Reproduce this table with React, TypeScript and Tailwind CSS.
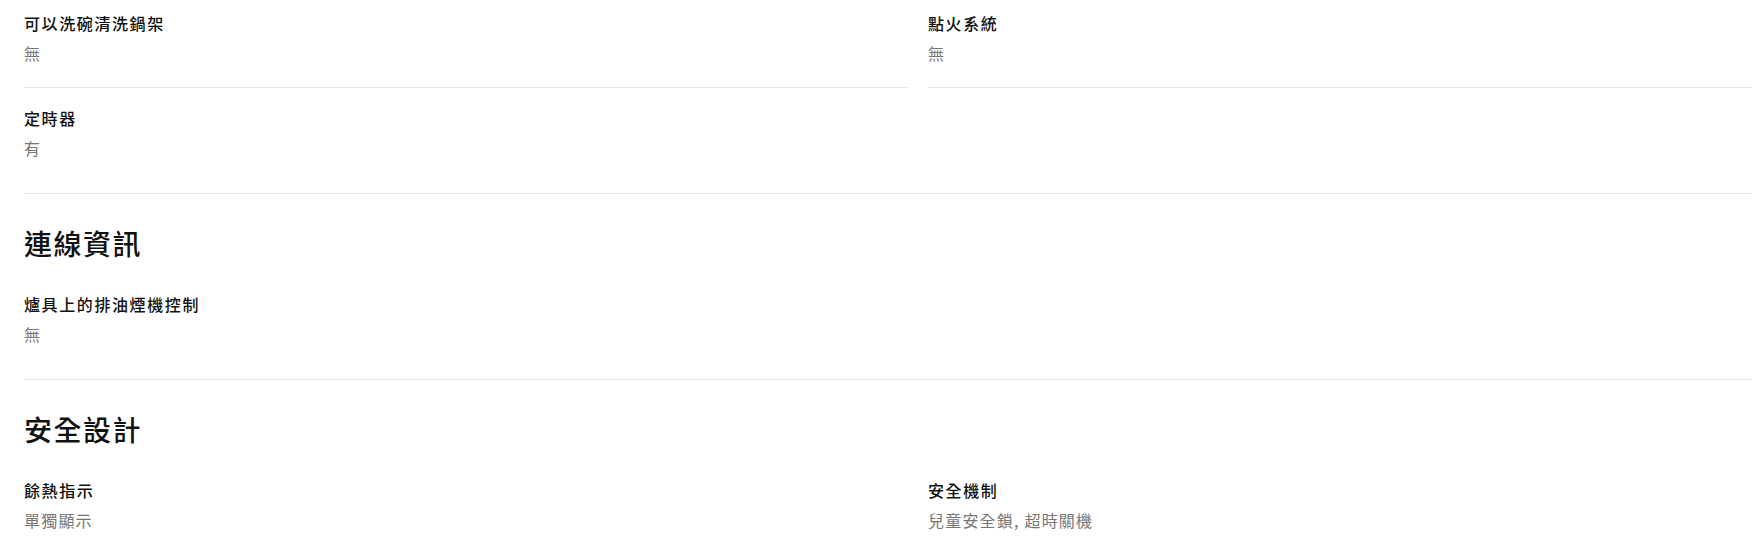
import React from 'react'

type Spec = { label: string; value: string }
type Section = { title?: string; items: Spec[] }

const SECTIONS: Section[] = [
    {
        items: [
            { label: '可以洗碗清洗鍋架', value: '無' },
            { label: '點火系統', value: '無' },
            { label: '定時器', value: '有' },
        ],
    },
    {
        title: '連線資訊',
        items: [{ label: '爐具上的排油煙機控制', value: '無' }],
    },
    {
        title: '安全設計',
        items: [
            { label: '餘熱指示', value: '單獨顯示' },
            { label: '安全機制', value: '兒童安全鎖, 超時關機' },
        ],
    },
]

function SpecCell({ spec, bordered }: { spec: Spec; bordered: boolean }) {
    return (
        <div className={`pt-[18px] pb-[22px] ${bordered ? 'border-b border-[#e5e5e5]' : ''}`}>
            <div className="text-[16px] leading-6 font-medium tracking-[1.6px] text-[#111111]">{spec.label}</div>
            <div className="mt-1.5 text-[16px] leading-6 tracking-[1.2px] text-[#767676]">{spec.value}</div>
        </div>
    )
}

function SpecSection({ section, first }: { section: Section; first: boolean }) {
    const lastRow = Math.floor((section.items.length - 1) / 2)
    return (
        <section className={`border-b border-[#e5e5e5] pb-[11px] ${first ? '-mt-[7px]' : 'pt-[31px]'}`}>
            {section.title && (
                <h2 className="mb-[13px] text-[28px] leading-9 font-medium tracking-[1.5px] text-[#111111]">{section.title}</h2>
            )}
            <div className="grid grid-cols-2 gap-x-5">
                {section.items.map((spec, i) => (
                    <SpecCell key={spec.label} spec={spec} bordered={Math.floor(i / 2) < lastRow} />
                ))}
            </div>
        </section>
    )
}

export default function App() {
    return (
        <div className="h-[552px] w-full overflow-hidden bg-white font-['Noto_Sans_CJK_TC','Noto_Sans',sans-serif]">
            <div className="w-[1836px] px-6">
                {SECTIONS.map((section, i) => (
                    <SpecSection key={i} section={section} first={i === 0} />
                ))}
            </div>
        </div>
    )
}
